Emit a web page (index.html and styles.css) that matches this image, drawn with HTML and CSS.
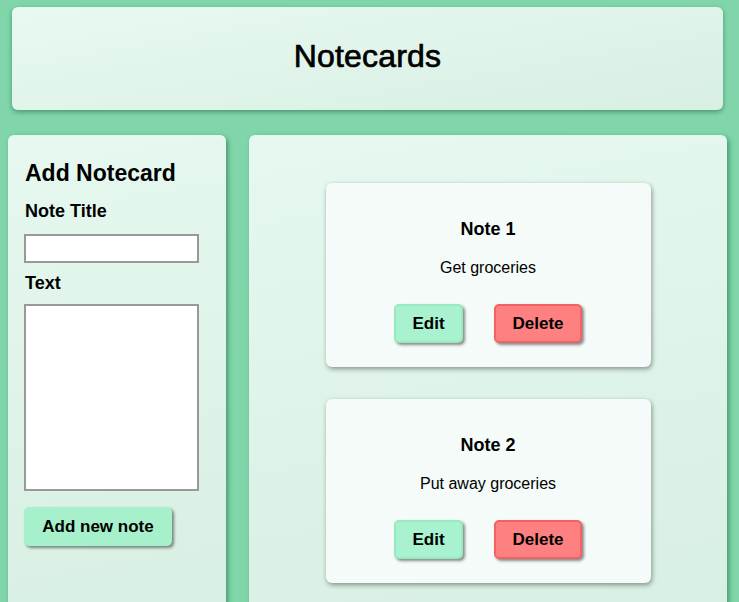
FILE: index.html
```html
<!DOCTYPE html>
<html>
<head>
<meta charset="utf-8">
<link rel="stylesheet" href="styles.css">
</head>
<body>
<header class="header">
  <h1 class="title">Notecards</h1>
</header>
<main class="layout">
  <section class="sidebar">
    <h2 class="side-title">Add Notecard</h2>
    <label class="field-label">Note Title</label>
    <input class="title-input" type="text">
    <label class="field-label">Text</label>
    <textarea class="text-input"></textarea>
    <button class="btn btn-add">Add new note</button>
  </section>
  <section class="notes">
    <article class="note">
      <h3 class="note-title">Note 1</h3>
      <p class="note-text">Get groceries</p>
      <div class="note-actions">
        <button class="btn btn-edit">Edit</button>
        <button class="btn btn-delete">Delete</button>
      </div>
    </article>
    <article class="note">
      <h3 class="note-title">Note 2</h3>
      <p class="note-text">Put away groceries</p>
      <div class="note-actions">
        <button class="btn btn-edit">Edit</button>
        <button class="btn btn-delete">Delete</button>
      </div>
    </article>
  </section>
</main>
</body>
</html>
```
FILE: styles.css
```css
html, body {
  margin: 0;
  padding: 0;
  height: 100%;
  overflow: hidden;
}
body {
  background: #80d6aa;
  font-family: "Liberation Sans", Arial, sans-serif;
  color: #000;
  padding: 7px 12px 0 8px;
  box-sizing: border-box;
}
.header {
  margin: 0 4px 0 4px;
  height: 103px;
  box-sizing: border-box;
  padding-bottom: 4px;
  border-radius: 6px;
  background: linear-gradient(170deg, #e8f9f1 0%, #d8efe3 100%);
  box-shadow: 0 2px 5px rgba(0, 70, 40, 0.45);
  display: flex;
  align-items: center;
  justify-content: center;
}
.title {
  margin: 0;
  font-size: 32px;
  font-weight: normal;
  letter-spacing: 0.2px;
  -webkit-text-stroke: 0.7px #000;
}
.layout {
  display: grid;
  grid-template-columns: 218px 1fr;
  column-gap: 23px;
  margin-top: 25px;
}
.sidebar, .notes {
  border-radius: 6px;
  background: linear-gradient(170deg, #e6f8ef 0%, #d8efe3 100%);
  box-shadow: 2px 2px 5px rgba(0, 70, 40, 0.45);
  height: 480px;
}
.sidebar {
  padding: 24px 16px 0 16px;
  box-sizing: border-box;
  display: flex;
  flex-direction: column;
  align-items: flex-start;
}
.side-title {
  margin: 0 0 14px 1px;
  font-size: 23px;
  font-weight: bold;
  line-height: 28px;
}
.field-label {
  margin-left: 1px;
  font-size: 18px;
  font-weight: bold;
  line-height: 20px;
}
.title-input {
  margin: 13px 0 10px;
  width: 175px;
  height: 29px;
  box-sizing: border-box;
  border: 2px solid #999;
  background: #fff;
  padding: 0;
}
.text-input {
  margin: 11px 0 16px;
  width: 175px;
  height: 187px;
  box-sizing: border-box;
  border: 2px solid #999;
  background: #fff;
  padding: 0;
  resize: none;
}
.btn {
  font-family: "Liberation Sans", Arial, sans-serif;
  font-weight: bold;
  font-size: 17px;
  height: 39px;
  border-radius: 5px;
  box-shadow: 2px 2px 3px rgba(0, 0, 0, 0.45);
  cursor: pointer;
  color: #000;
  padding: 0;
}
.btn-add {
  width: 148px;
  background: #a6f0cc;
  border: none;
}
.notes {
  padding-top: 48px;
  box-sizing: border-box;
  display: flex;
  flex-direction: column;
  align-items: center;
  gap: 32px;
}
.note {
  width: 325px;
  height: 184px;
  box-sizing: border-box;
  border-radius: 6px;
  background: #f4fbf8;
  box-shadow: 1px 2px 5px rgba(0, 0, 0, 0.4);
  padding-top: 35px;
  display: flex;
  flex-direction: column;
  align-items: center;
}
.note-title {
  margin: 0;
  font-size: 18px;
  font-weight: bold;
  line-height: 22px;
}
.note-text {
  margin: 19px 0 0;
  font-size: 16px;
  line-height: 18px;
}
.note-actions {
  margin-top: 27px;
  display: flex;
  gap: 31px;
}
.btn-edit {
  width: 69px;
  background: #a8f2d0;
  border: 2px solid #98e8c2;
}
.btn-delete {
  width: 88px;
  background: #ff8080;
  border: 2px solid #f26262;
}
```
